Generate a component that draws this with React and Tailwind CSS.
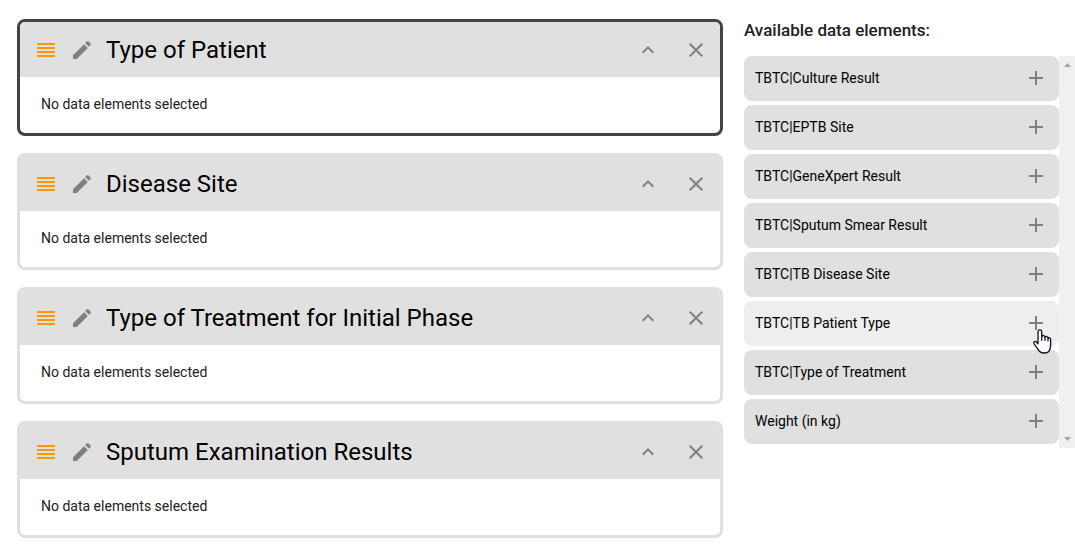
import { useState } from 'react'

const GROUPS = [
  'Type of Patient',
  'Disease Site',
  'Type of Treatment for Initial Phase',
  'Sputum Examination Results',
]

const ELEMENTS = [
  'TBTC|Culture Result',
  'TBTC|EPTB Site',
  'TBTC|GeneXpert Result',
  'TBTC|Sputum Smear Result',
  'TBTC|TB Disease Site',
  'TBTC|TB Patient Type',
  'TBTC|Type of Treatment',
  'Weight (in kg)',
]

const ICONS = {
  reorder: 'M3 15h18v-2H3v2zm0 4h18v-2H3v2zm0-8h18V9H3v2zm0-6v2h18V5H3z',
  edit: 'M3 17.25V21h3.75L17.81 9.94l-3.75-3.75L3 17.25zM20.71 7.04a1 1 0 0 0 0-1.41l-2.34-2.34a1 1 0 0 0-1.41 0l-1.83 1.83 3.75 3.75 1.83-1.83z',
  collapse: 'M12 8l-6 6 1.41 1.41L12 10.83l4.59 4.58L18 14z',
  close: 'M19 6.41L17.59 5 12 10.59 6.41 5 5 6.41 10.59 12 5 17.59 6.41 19 12 13.41 17.59 19 19 17.59 13.41 12z',
  add: 'M19 13h-6v6h-2v-6H5v-2h6V5h2v6h6v2z',
}

function Icon({ name }) {
  return (
    <svg viewBox="0 0 24 24" className="block size-6 fill-current" aria-hidden="true">
      <path d={ICONS[name]} />
    </svg>
  )
}

function GroupCard({ title, active, onSelect }) {
  return (
    <section
      onClick={onSelect}
      className={`overflow-hidden rounded-lg border-3 bg-white ${active ? 'border-[#434343]' : 'border-[#e0e0e0]'}`}
    >
      <header className="flex items-center bg-[#e0e0e0] pt-4 pr-3 pb-[15px] pl-[14px] text-[#808080]">
        <button type="button" aria-label="Reorder group" className="text-[#ff9800]">
          <Icon name="reorder" />
        </button>
        <button type="button" aria-label="Edit name" className="ml-3">
          <Icon name="edit" />
        </button>
        <h2 className="ml-3 min-w-0 flex-1 text-2xl leading-6 text-black">{title}</h2>
        <button type="button" aria-label="Collapse group">
          <Icon name="collapse" />
        </button>
        <button type="button" aria-label="Remove group" className="ml-6">
          <Icon name="close" />
        </button>
      </header>
      <p className="px-[21px] pt-[17px] pb-[19px] text-sm text-[#212121]">No data elements selected</p>
    </section>
  )
}

function Pointer() {
  return (
    <svg viewBox="0 0 20 26" className="pointer-events-none absolute top-7 right-[6px] z-10 h-[26px] w-5" aria-hidden="true">
      <path
        d="M5 14.800V2.700C5 .3 8.700.3 8.700 2.700V7.400C9.300 6 12 6.300 12 8.200 12.700 7 15 7.300 15 9.200 15.800 8.300 17.600 8.800 17.600 10.600V16.200C17.600 21 15.500 24 11.300 24 7.500 24 6.200 22.600 4.800 20.100L1.200 15C.1 13.200 1.800 11.700 3.200 12.800Z"
        fill="#fff"
        stroke="#101020"
        strokeWidth="1.300"
        strokeLinejoin="round"
      />
      <path d="M8.700 7v4.800M12 8v4M15 9v3.500" fill="none" stroke="#101020" strokeWidth="1.200" />
    </svg>
  )
}

export default function App() {
  const [active, setActive] = useState(0)
  return (
    <main className="flex items-start gap-[21px] bg-white pl-[17px] font-['Roboto',sans-serif]">
      <div className="flex min-w-0 flex-1 flex-col gap-[17px] pt-[19px] pb-2">
        {GROUPS.map((title, i) => (
          <GroupCard key={title} title={title} active={i === active} onSelect={() => setActive(i)} />
        ))}
      </div>
      <aside className="w-[331px] shrink-0 pt-[18px]">
        <h3 className="pb-[14px] text-[17px] leading-6 font-medium text-[#212121]">Available data elements:</h3>
        <div className="flex">
          <ul className="flex min-w-0 flex-1 flex-col gap-1 pb-1">
            {ELEMENTS.map((label) => (
              <li key={label} className="relative">
                <button
                  type="button"
                  className={`flex w-full items-center justify-between rounded-lg pt-[10px] pr-[11px] pb-[11px] pl-[11px] text-left text-sm leading-6 text-black ${label === 'TBTC|TB Patient Type' ? 'bg-[#eeeeee]' : 'bg-[#e0e0e0]'}`}
                >
                  {label}
                  <span className="text-[#808080]">
                    <Icon name="add" />
                  </span>
                </button>
                {label === 'TBTC|TB Patient Type' && <Pointer />}
              </li>
            ))}
          </ul>
          <div className="flex w-4 flex-col items-center justify-between bg-[#f0f0f0] py-[6px]" aria-hidden="true">
            <svg viewBox="0 0 7 5" className="h-[5px] w-[7px] fill-[#a3a3a3]">
              <path d="M0 5L3.500 1 7 5z" />
            </svg>
            <svg viewBox="0 0 7 5" className="h-[5px] w-[7px] fill-[#a3a3a3]">
              <path d="M0 0L3.500 4 7 0z" />
            </svg>
          </div>
        </div>
      </aside>
    </main>
  )
}
